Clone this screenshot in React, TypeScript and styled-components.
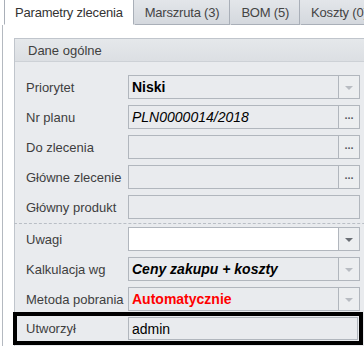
import React from 'react';
import styled, { createGlobalStyle } from 'styled-components';

const GlobalStyle = createGlobalStyle`
  html, body {
    margin: 0;
    padding: 0;
    background: #ffffff;
    overflow: hidden;
  }
  body {
    font-family: 'Liberation Sans', Arial, sans-serif;
    font-size: 13px;
    color: #3b3b3b;
  }
`;

const Page = styled.div`
  width: 364px;
  height: 346px;
  overflow: hidden;
  display: flex;
  flex-direction: column;
`;

const TabStrip = styled.div`
  display: flex;
  height: 25px;
  padding-left: 4px;
  box-sizing: border-box;
  border-bottom: 1px solid transparent;
`;

const Spacer = styled.div`
  flex: 1;
  border-bottom: 1px solid #a9afb8;
`;

const Tab = styled.div<{ $active?: boolean }>`
  flex: none;
  height: 25px;
  box-sizing: border-box;
  padding: 0 10px;
  display: flex;
  align-items: center;
  white-space: nowrap;
  font-size: 13px;
  letter-spacing: -0.2px;
  color: ${p => (p.$active ? '#333' : '#444')};
  background: ${p => (p.$active ? '#ffffff' : 'linear-gradient(#e3e6ea, #d4d8de)')};
  border-left: 1px solid ${p => (p.$active ? '#a9afb8' : 'transparent')};
  border-right: 1px solid #a9afb8;
  border-bottom: 1px solid ${p => (p.$active ? '#ffffff' : '#a9afb8')};
  margin-bottom: -1px;
`;

const Panel = styled.div`
  flex: 1;
  margin-left: 2px;
  border-left: 1px solid #b4b9c0;
  background: #ffffff;
  padding: 13px 0 0 11px;
`;

const Group = styled.div`
  margin-right: -40px;
  border: 1px solid #c0c5cc;
  background: #e9ebee;
  height: 400px;
`;

const GroupHeader = styled.div`
  height: 23px;
  box-sizing: border-box;
  border-bottom: 1px solid #cdd1d6;
  background: linear-gradient(#e5e8eb, #dcdfe3);
  padding-left: 13px;
  display: flex;
  align-items: center;
  color: #404040;
`;

const Fields = styled.div`
  display: flex;
  flex-direction: column;
  gap: 6px;
  padding: 13px 0 0 11px;
  width: 334px;
`;

const Row = styled.div`
  display: grid;
  grid-template-columns: 102px 232px;
  align-items: center;
  height: 24px;
`;

const HighlightRow = styled.div`
  display: grid;
  grid-template-columns: 102px 230px;
  align-items: center;
  margin: -5px 0 0 -13px;
  width: 350px;
  box-sizing: border-box;
  border: 4px solid #000;
  padding: 1px 0 1px 9px;
`;

const Label = styled.div`
  white-space: nowrap;
  color: #3e3e3e;
`;

const Separator = styled.div`
  margin: -2px -40px -3px -12px;
  border-top: 1px dashed #b9bec5;
`;

const Input = styled.div<{ $white?: boolean; $h?: number }>`
  display: flex;
  height: ${p => p.$h ?? 24}px;
  box-sizing: border-box;
  border: 1px solid #b1b6bd;
  background: ${p => (p.$white ? '#ffffff' : '#e9ebee')};
`;

const Value = styled.div<{ $bold?: boolean; $italic?: boolean; $color?: string }>`
  flex: 1;
  display: flex;
  align-items: center;
  padding-left: 3px;
  white-space: nowrap;
  overflow: hidden;
  font-size: 14px;
  font-weight: ${p => (p.$bold ? 700 : 400)};
  font-style: ${p => (p.$italic ? 'italic' : 'normal')};
  color: ${p => p.$color ?? '#000'};
`;

const SideButton = styled.div`
  width: 20px;
  flex: none;
  border-left: 1px solid #b1b6bd;
  display: flex;
  align-items: center;
  justify-content: center;
  background: #eceef0;
`;

const Arrow = styled.div<{ $dark?: boolean }>`
  width: 0;
  height: 0;
  border-left: 4px solid transparent;
  border-right: 4px solid transparent;
  border-top: 4px solid ${p => (p.$dark ? '#6a6e74' : '#b8bcc2')};
  margin-top: 1px;
`;

const Dots = styled.div`
  font-size: 11px;
  font-weight: 700;
  color: #555a60;
  line-height: 1;
  margin-top: -4px;
`;

type Kind = 'combo' | 'dots' | 'plain';

interface FieldProps {
  label: string;
  kind: Kind;
  value?: string;
  bold?: boolean;
  italic?: boolean;
  color?: string;
  white?: boolean;
}

const Field: React.FC<FieldProps> = ({ label, kind, value, bold, italic, color, white }) => (
  <Row>
    <Label>{label}</Label>
    <Input $white={white}>
      <Value $bold={bold} $italic={italic} $color={color}>{value}</Value>
      {kind === 'combo' && (
        <SideButton>
          <Arrow $dark={white} />
        </SideButton>
      )}
      {kind === 'dots' && (
        <SideButton>
          <Dots>...</Dots>
        </SideButton>
      )}
    </Input>
  </Row>
);

export default function App() {
  return (
    <Page>
      <GlobalStyle />
      <TabStrip>
        <Tab $active>Parametry zlecenia</Tab>
        <Tab>Marszruta (3)</Tab>
        <Tab>BOM (5)</Tab>
        <Tab>Koszty (0)</Tab>
        <Spacer />
      </TabStrip>
      <Panel>
        <Group>
          <GroupHeader>Dane ogólne</GroupHeader>
          <Fields>
            <Field label="Priorytet" kind="combo" value="Niski" bold />
            <Field label="Nr planu" kind="dots" value="PLN0000014/2018" italic />
            <Field label="Do zlecenia" kind="dots" />
            <Field label="Główne zlecenie" kind="dots" />
            <Field label="Główny produkt" kind="plain" />
            <Separator />
            <Field label="Uwagi" kind="combo" white />
            <Field label="Kalkulacja wg" kind="combo" value="Ceny zakupu + koszty" bold italic />
            <Field label="Metoda pobrania" kind="combo" value="Automatycznie" bold color="#ff0000" />
            <HighlightRow>
              <Label>Utworzył</Label>
              <Input $h={23}>
                <Value>admin</Value>
              </Input>
            </HighlightRow>
          </Fields>
        </Group>
      </Panel>
    </Page>
  );
}
